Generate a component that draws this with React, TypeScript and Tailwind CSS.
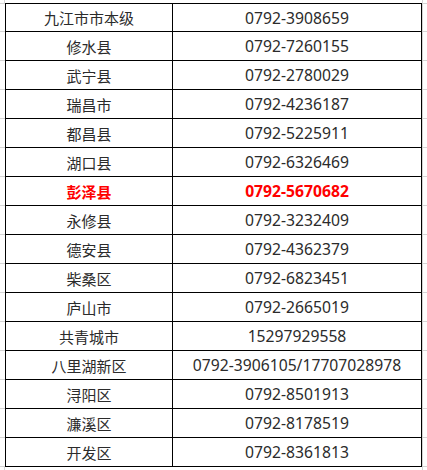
const rows: { name: string; phone: string; hot?: boolean }[] = [
  { name: "九江市市本级", phone: "0792-3908659" },
  { name: "修水县", phone: "0792-7260155" },
  { name: "武宁县", phone: "0792-2780029" },
  { name: "瑞昌市", phone: "0792-4236187" },
  { name: "都昌县", phone: "0792-5225911" },
  { name: "湖口县", phone: "0792-6326469" },
  { name: "彭泽县", phone: "0792-5670682", hot: true },
  { name: "永修县", phone: "0792-3232409" },
  { name: "德安县", phone: "0792-4362379" },
  { name: "柴桑区", phone: "0792-6823451" },
  { name: "庐山市", phone: "0792-2665019" },
  { name: "共青城市", phone: "15297929558" },
  { name: "八里湖新区", phone: "0792-3906105/17707028978" },
  { name: "浔阳区", phone: "0792-8501913" },
  { name: "濂溪区", phone: "0792-8178519" },
  { name: "开发区", phone: "0792-8361813" },
];

export default function App() {
  return (
    <div
      className="w-[427px] h-[470px] bg-white flex flex-col text-[15px] text-[#2b2b2b]"
      style={{ fontFamily: '"Noto Sans", "Noto Sans CJK SC", sans-serif' }}
    >
      {/* top margin with sheet gridlines */}
      <div className="flex h-[3px]">
        <div className="w-[5px] border-r border-[#d4d4d4]" />
        <div className="w-[417px]" />
        <div className="flex-1 border-l border-[#d4d4d4]" />
      </div>

      {rows.map((r, i) => (
        <div key={r.name} className="flex h-[29px]">
          <div className={`w-[5px] border-b border-[#d4d4d4] ${i === 0 ? "border-t" : ""}`} />
          <div
            className={`w-[167px] flex items-center justify-center border-l border-b border-black pt-[2px] ${
              i === 0 ? "border-t" : ""
            } ${r.hot ? "text-[#ff0000] font-bold" : ""}`}
          >
            {r.name}
          </div>
          <div
            className={`w-[250px] flex items-center justify-center border-x border-b border-black pt-[2px] text-[15.7px] ${
              i === 0 ? "border-t" : ""
            } ${r.hot ? "text-[#ff0000] font-bold" : ""}`}
          >
            {r.phone}
          </div>
          <div className={`flex-1 border-b border-l border-[#d4d4d4] ${i === 0 ? "border-t" : ""}`} />
        </div>
      ))}

      {/* remainder below the table */}
      <div className="flex flex-1">
        <div className="w-[5px] border-r border-[#d4d4d4]" />
        <div className="w-[417px]" />
        <div className="flex-1 border-l border-[#d4d4d4]" />
      </div>
    </div>
  );
}
